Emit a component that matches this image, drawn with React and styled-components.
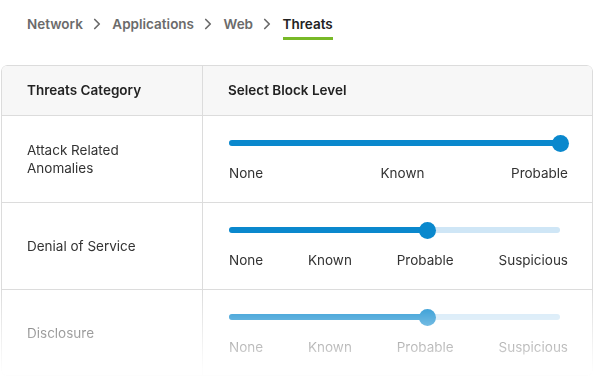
import styled, { createGlobalStyle } from "styled-components";
import { ChevronRight } from "lucide-react";

const GlobalStyle = createGlobalStyle`
  html, body {
    margin: 0;
    padding: 0;
    background: #fff;
    overflow: hidden;
  }
  body {
    font-family: Inter, "Noto Sans", "Liberation Sans", sans-serif;
    -webkit-font-smoothing: antialiased;
  }
`;

const Page = styled.div`
  width: 594px;
  height: 383px;
  overflow: hidden;
`;

const Crumbs = styled.nav`
  display: flex;
  align-items: flex-start;
  gap: 4.75px;
  padding: 15px 0 0 27px;
  height: 50px;
  box-sizing: border-box;
`;

const Crumb = styled.span`
  font-size: 13.5px;
  font-weight: 600;
  line-height: 18px;
  color: ${(p) => (p.current ? "#222" : "#6b6b6b")};
  padding-bottom: 4px;
  border-bottom: 3px solid ${(p) => (p.current ? "#78b928" : "transparent")};
`;

const Sep = styled.span`
  display: flex;
  align-items: center;
  height: 18px;
  color: #6b6b6b;
  margin-right: 2px;
`;

const Card = styled.div`
  margin: 15px 1px 0;
  border: 1px solid #dcdcdc;
  border-radius: 6px;
  overflow: hidden;
  -webkit-mask-image: linear-gradient(to bottom, #000 225px, rgba(0,0,0,0.05) 305px);
  mask-image: linear-gradient(to bottom, #000 225px, rgba(0,0,0,0.05) 305px);
`;

const Row = styled.div`
  display: grid;
  grid-template-columns: 200px 1fr;
  height: ${(p) => p.h}px;
  background: ${(p) => (p.head ? "#f7f7f7" : "#fff")};
  & + & {
    border-top: 1px solid #dcdcdc;
  }
`;

const Cell = styled.div`
  display: flex;
  align-items: center;
  padding: 0 24px 0 25px;
  font-size: 13.5px;
  line-height: 18px;
  color: #333;
  & + & {
    border-left: 1px solid #dcdcdc;
  }
`;

const HeadCell = styled(Cell)`
  font-weight: 600;
  color: #222;
  padding-bottom: 1px;
`;

const LevelCell = styled.div`
  border-left: 1px solid #dcdcdc;
  padding: 24px 24px 0 26px;
  display: flex;
  flex-direction: column;
`;

const Track = styled.div`
  position: relative;
  height: 6px;
  margin-right: 8px;
  border-radius: 3px;
  background: #cfe6f6;
`;

const Fill = styled.div`
  height: 100%;
  border-radius: 3px;
  background: #0a88cd;
`;

const Thumb = styled.div`
  position: absolute;
  top: 50%;
  width: 17px;
  height: 17px;
  margin: -8.5px 0 0 -8.5px;
  border-radius: 50%;
  background: #0a88cd;
`;

const Labels = styled.div`
  display: ${(p) => (p.three ? "grid" : "flex")};
  grid-template-columns: 1fr auto 1fr;
  justify-content: space-between;
  margin-top: 18px;
  font-size: 13.5px;
  line-height: 18px;
  color: #333;
  ${(p) =>
    p.three &&
    `
    & > span:nth-child(2) { padding-left: 8px; }
    & > span:last-child { justify-self: end; }
  `}
`;

const rows = [
  {
    name: ["Attack Related", "Anomalies"],
    levels: ["None", "Known", "Probable"],
    value: 100,
    h: 86,
  },
  {
    name: ["Denial of Service"],
    levels: ["None", "Known", "Probable", "Suspicious"],
    value: 60,
    h: 86,
  },
  {
    name: ["Disclosure"],
    levels: ["None", "Known", "Probable", "Suspicious"],
    value: 60,
    h: 85,
  },
];

function Slider({ value }) {
  return (
    <Track>
      <Fill style={{ width: value + "%" }} />
      <Thumb style={{ left: value + "%" }} />
    </Track>
  );
}

export default function App() {
  const crumbs = ["Network", "Applications", "Web"];
  return (
    <Page>
      <GlobalStyle />
      <Crumbs>
        {crumbs.map((c) => [
          <Crumb key={c}>{c}</Crumb>,
          <Sep key={c + "-sep"}>
            <ChevronRight size={18} strokeWidth={2.3} />
          </Sep>,
        ])}
        <Crumb current={1}>Threats</Crumb>
      </Crumbs>
      <Card>
        <Row head={1} h={49}>
          <HeadCell>Threats Category</HeadCell>
          <HeadCell>Select Block Level</HeadCell>
        </Row>
        {rows.map((r) => (
          <Row key={r.name.join(" ")} h={r.h}>
            <Cell>
              <div>
                {r.name.map((n) => (
                  <div key={n}>{n}</div>
                ))}
              </div>
            </Cell>
            <LevelCell>
              <Slider value={r.value} />
              <Labels three={r.levels.length === 3 ? 1 : 0}>
                {r.levels.map((l) => (
                  <span key={l}>{l}</span>
                ))}
              </Labels>
            </LevelCell>
          </Row>
        ))}
      </Card>
    </Page>
  );
}
